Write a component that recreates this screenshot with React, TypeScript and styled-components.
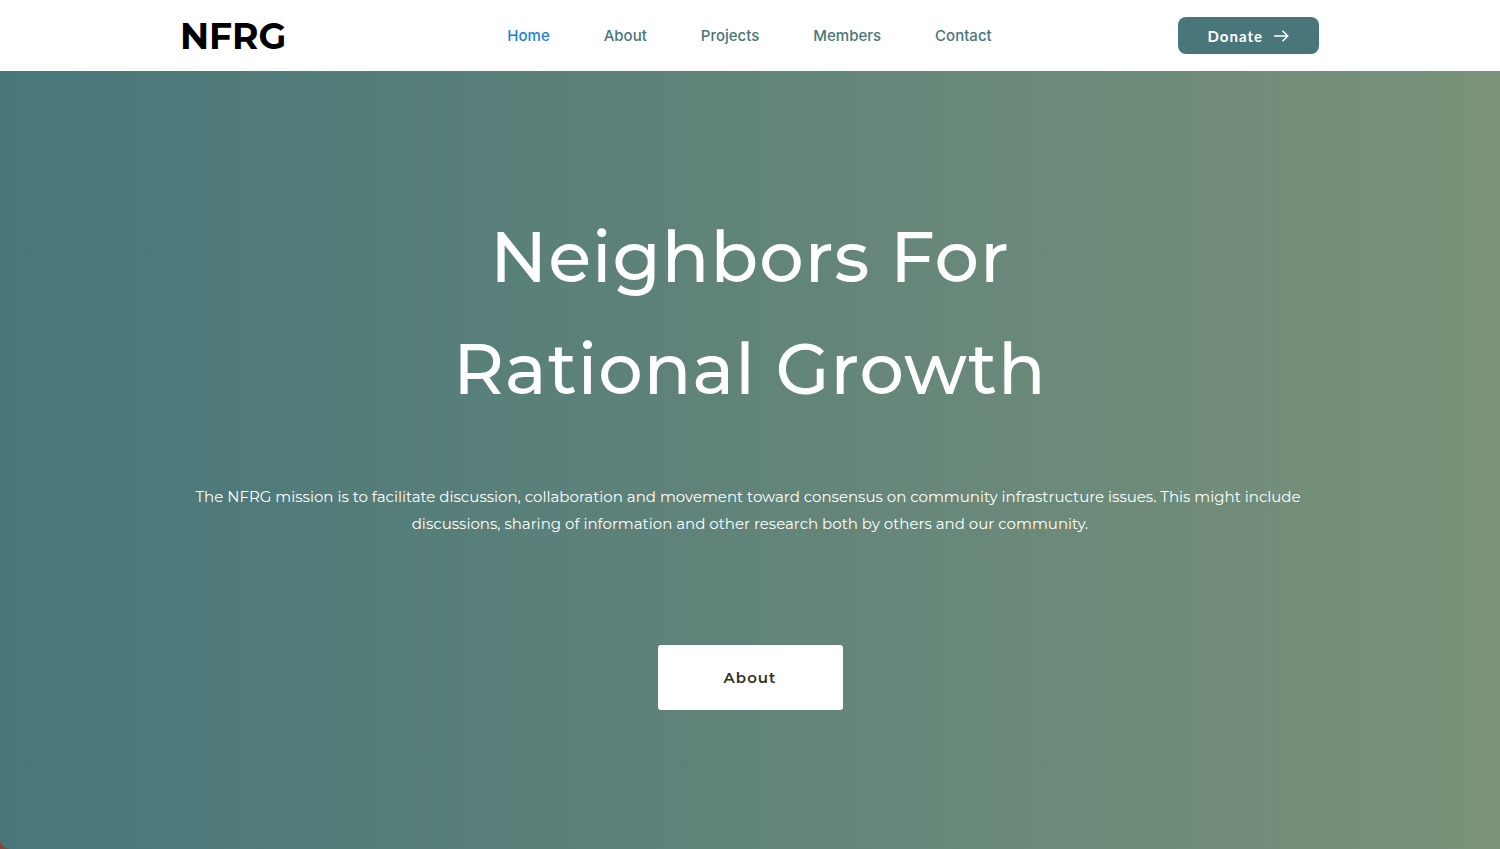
import React from "react";
import styled, { createGlobalStyle } from "styled-components";

const GlobalStyle = createGlobalStyle`
  *, *::before, *::after { box-sizing: border-box; }
  body { margin: 0; background: #7d4a3c; font-family: Montserrat, Inter, sans-serif; }
`;

const Page = styled.div`
  min-height: 100vh;
  display: flex;
  flex-direction: column;
`;

const Header = styled.header`
  background: #fff;
  padding: 0 181px 0 180px;
  height: 71px;
  display: grid;
  grid-template-columns: 1fr auto 1fr;
  align-items: center;
`;

const Logo = styled.a`
  color: #000;
  font-size: 36px;
  line-height: 44px;
  font-weight: 700;
  text-decoration: none;
`;

const Nav = styled.nav`
  display: flex;
  gap: 54px;
`;

const NavLink = styled.a<{ $active?: boolean }>`
  color: ${(p) => (p.$active ? "#1c7fdc" : "#48767a")};
  font-family: Inter, sans-serif;
  font-size: 15px;
  line-height: 24px;
  font-weight: 500;
  text-decoration: none;
`;

const DonateButton = styled.button`
  justify-self: end;
  display: flex;
  align-items: center;
  gap: 10px;
  height: 37px;
  padding: 0 30px;
  border: 0;
  border-radius: 8px;
  background: #48767a;
  color: #fff;
  font: 700 15px/20px Lato, sans-serif;
  letter-spacing: 1px;
  cursor: pointer;
`;

const Hero = styled.main`
  flex: 1;
  display: flex;
  flex-direction: column;
  align-items: center;
  padding: 130px 180px;
  border-bottom-left-radius: 10px;
  background: linear-gradient(90deg, #48767a, #7a9279);
  color: #fff;
  text-align: center;
`;

const Title = styled.h1`
  margin: 0;
  font-size: 70px;
  line-height: 112px;
  font-weight: 500;
  letter-spacing: 1px;
`;

const Mission = styled.p`
  margin: 58px 0 0;
  font-size: 15px;
  line-height: 27px;
  font-weight: 400;
`;

const AboutButton = styled.button`
  margin-top: 108px;
  width: 185px;
  height: 65px;
  border: 0;
  border-radius: 3px;
  background: #fff;
  color: #35301c;
  font: 600 15px/24px Montserrat, Inter, sans-serif;
  letter-spacing: 1px;
  cursor: pointer;
`;

const links = ["Home", "About", "Projects", "Members", "Contact"];

export default function App() {
  return (
    <Page>
      <GlobalStyle />
      <Header>
        <Logo href="#home">NFRG</Logo>
        <Nav aria-label="Main">
          {links.map((label) => (
            <NavLink key={label} href={`#${label.toLowerCase()}`} $active={label === "Home"}>
              {label}
            </NavLink>
          ))}
        </Nav>
        <DonateButton type="button">
          Donate
          <svg width="16" height="14" viewBox="0 0 16 14" fill="none" stroke="currentColor" strokeWidth="1.5" aria-hidden="true">
            <path d="M1 7h13.5M9.5 1.8 14.8 7l-5.3 5.2" strokeLinejoin="round" />
          </svg>
        </DonateButton>
      </Header>
      <Hero>
        <Title>
          Neighbors For
          <br />
          Rational Growth
        </Title>
        <Mission>
          The NFRG mission is to facilitate discussion, collaboration and movement toward consensus on community
          infrastructure issues. This might include&nbsp;
          <br />
          discussions, sharing of information and other research both by others and our community.
        </Mission>
        <AboutButton type="button">About</AboutButton>
      </Hero>
    </Page>
  );
}
